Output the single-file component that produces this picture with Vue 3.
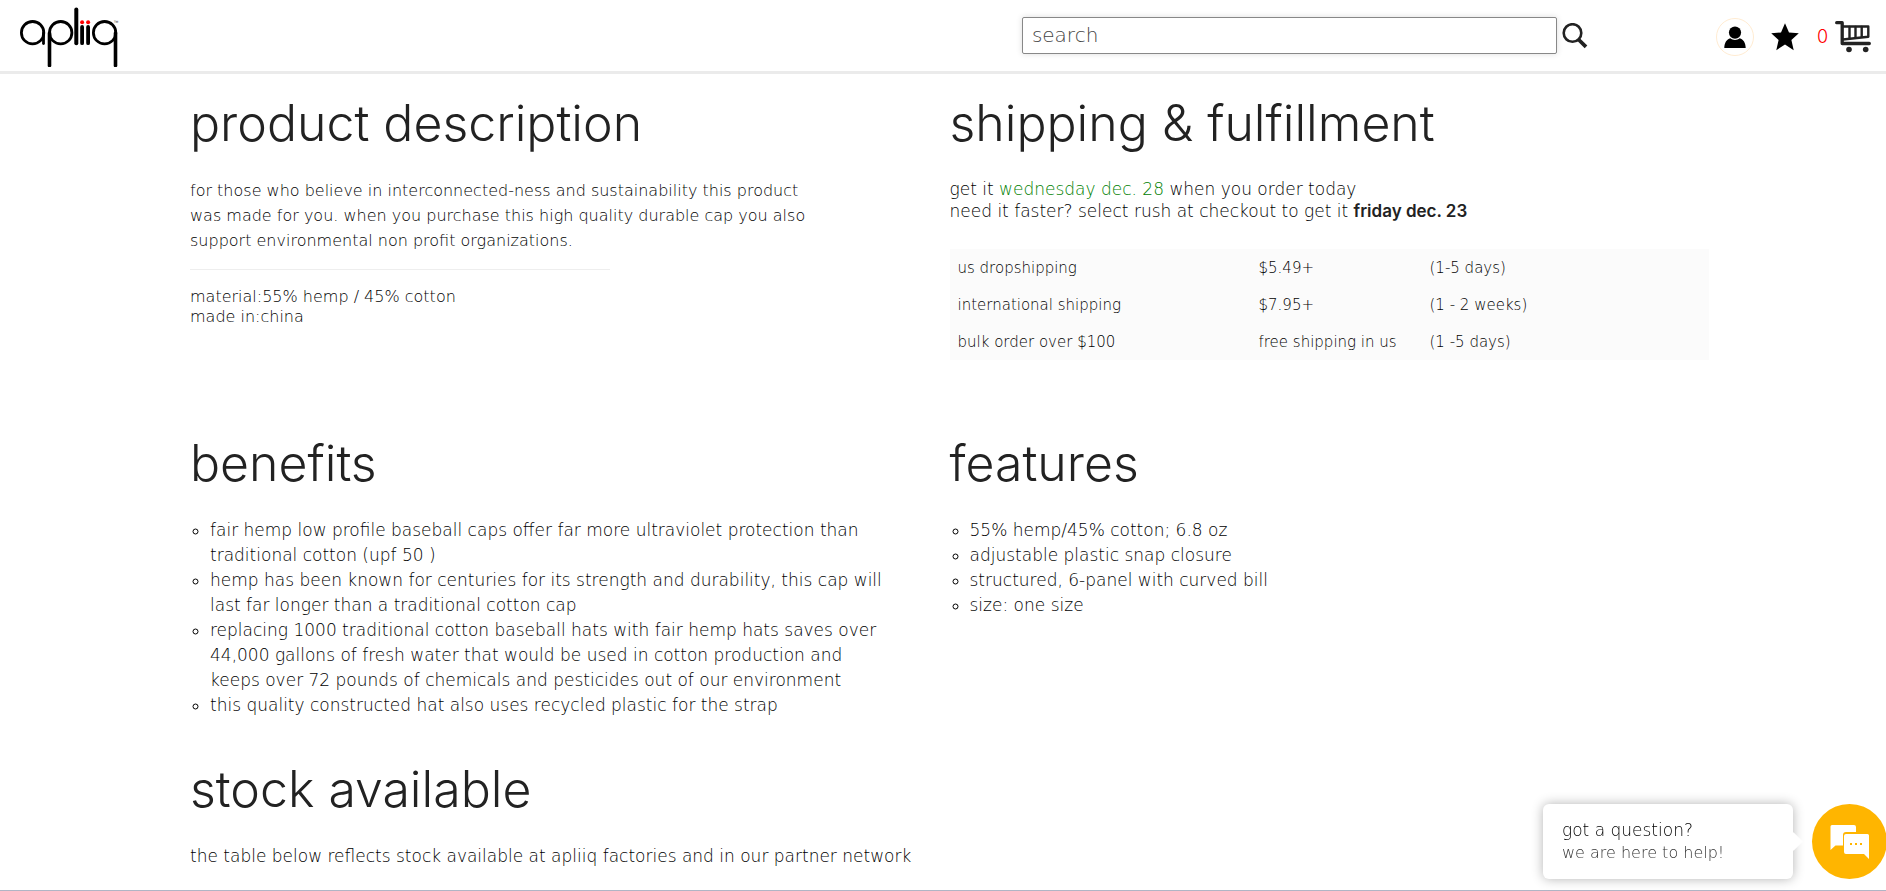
<script setup>
import { ref } from 'vue'

const query = ref('')
const cartCount = ref(0)

const shipping = [
  { method: 'us dropshipping', price: '$5.49+', time: '(1-5 days)' },
  { method: 'international shipping', price: '$7.95+', time: '(1 - 2 weeks)' },
  { method: 'bulk order over $100', price: 'free shipping in us', time: '(1 -5 days)' },
]

const benefits = [
  'fair hemp low profile baseball caps offer far more ultraviolet protection than traditional cotton (upf 50 )',
  'hemp has been known for centuries for its strength and durability, this cap will last far longer than a traditional cotton cap',
  'replacing 1000 traditional cotton baseball hats with fair hemp hats saves over 44,000 gallons of fresh water that would be used in cotton production and keeps over 72 pounds of chemicals and pesticides out of our environment',
  'this quality constructed hat also uses recycled plastic for the strap',
]

const features = [
  '55% hemp/45% cotton; 6.8 oz',
  'adjustable plastic snap closure',
  'structured, 6-panel with curved bill',
  'size: one size',
]
</script>

<template>
  <div class="page">
    <header class="bar">
      <a class="logo" href="#" aria-label="apliiq home">
        <svg width="100" height="60" viewBox="19 7 100 60" fill="none" stroke="#000" stroke-width="2.8" stroke-linecap="round">
          <circle cx="32.6" cy="32.7" r="11.2" />
          <path d="M43.5 33V43.5" />
          <circle cx="60.7" cy="32.7" r="11.2" />
          <path d="M49.5 33V65.5" stroke-width="3.6" />
          <path d="M76.3 9.6V43.2" stroke-width="4" />
          <path d="M82.1 27V43.2M88.1 27V43.2" stroke-width="3.8" />
          <circle cx="104.6" cy="32.7" r="11.2" />
          <path d="M115.5 33V65.5" stroke-width="3.6" />
          <g fill="#f00" stroke="none">
            <circle cx="82.1" cy="22.3" r="2" />
            <circle cx="88.1" cy="22.3" r="2" />
          </g>
          <text x="113.5" y="23.5" font-size="5" fill="#333" stroke="none">™</text>
        </svg>
      </a>

      <form class="search" role="search" @submit.prevent>
        <input v-model="query" type="search" placeholder="search" aria-label="search" />
        <button type="submit" aria-label="submit search">
          <svg width="26" height="26" viewBox="0 0 26 26" fill="none" stroke="#222">
            <circle cx="10.5" cy="10" r="8.8" stroke-width="2.6" />
            <path d="M16.5 16.5L24 23.8" stroke-width="3.8" />
          </svg>
        </button>
      </form>

      <nav class="tools" aria-label="account">
        <a class="user" href="#" aria-label="my account">
          <svg width="22" height="22" viewBox="0 0 22 22">
            <circle cx="11" cy="6.6" r="6.1" />
            <path d="M.3 22c0-5 2.4-8.7 6-9.7 2.700 2.300 6.700 2.300 9.400 0 3.600 1 6 4.700 6 9.700z" />
          </svg>
        </a>
        <a class="star" href="#" aria-label="favorites">
          <svg width="28" height="28" viewBox="0 0 28 28">
            <path d="M14 .2l4 9.300 9.800.7-7.400 6.700 2.300 10.300L14 21.600l-8.700 5.600 2.300-10.300L.2 10.200 10 9.500z" />
          </svg>
        </a>
        <a class="cart" href="#" aria-label="cart">
          <span>{{ cartCount }}</span>
          <svg width="36" height="32" viewBox="0 0 36 32" fill="none" stroke="#222" stroke-linecap="round" stroke-linejoin="round">
            <path d="M1.700 1.700H7.200V22.500H34.300" stroke-width="3.300" />
            <path d="M8 5.500H33.300V15.700L8 18.500" stroke-width="2.400" />
            <path d="M14.500 6V17M20.500 6V16.500M26.700 6V15.800" stroke-width="2.400" />
            <circle cx="14" cy="28.500" r="2.800" fill="#222" stroke="none" />
            <circle cx="30.700" cy="28.500" r="2.800" fill="#222" stroke="none" />
          </svg>
        </a>
      </nav>
    </header>

    <main class="content">
      <section class="top">
        <h2>product description</h2>
        <p class="intro">
          for those who believe in interconnected-ness and sustainability this product was made for you.
          when you purchase this high quality durable cap you also support environmental non profit organizations.
        </p>
        <hr />
        <p class="specs">material:55% hemp / 45% cotton<br />made in:china</p>
      </section>

      <section class="top">
        <h2>shipping &amp; fulfillment</h2>
        <p class="delivery">
          get it <span class="date">wednesday dec. 28</span> when you order today<br />
          need it faster? select rush at checkout to get it <strong>friday dec. 23</strong>
        </p>
        <table>
          <tbody>
            <tr v-for="row in shipping" :key="row.method">
              <td>{{ row.method }}</td>
              <td>{{ row.price }}</td>
              <td>{{ row.time }}</td>
            </tr>
          </tbody>
        </table>
      </section>

      <section class="middle">
        <h2>benefits</h2>
        <ul>
          <li v-for="item in benefits" :key="item">{{ item }}</li>
        </ul>
      </section>

      <section class="middle">
        <h2>features</h2>
        <ul>
          <li v-for="item in features" :key="item">{{ item }}</li>
        </ul>
      </section>

      <section class="stock">
        <h2>stock available</h2>
        <p>the table below reflects stock available at apliiq factories and in our partner network</p>
      </section>
    </main>
    <div class="rule"></div>

    <aside class="chat">
      <div class="bubble">
        <p class="ask">got a question?</p>
        <p class="help">we are here to help!</p>
      </div>
      <button type="button" aria-label="open chat">
        <svg width="40" height="36" viewBox="0 0 40 36">
          <path d="M2 1H24a2 2 0 0 1 2 2V8H16a3 3 0 0 0-3 3V21.500H5.500L.5 26V2.500A1.500 1.500 0 0 1 2 1z" fill="#fff" />
          <path d="M16 10H37.500a1.500 1.500 0 0 1 1.500 1.500V35L34 30H16a2 2 0 0 1-2-2V12a2 2 0 0 1 2-2z" fill="#fff" />
          <g fill="#ffb500">
            <rect x="20" y="19" width="2" height="2" />
            <rect x="25" y="19" width="2" height="2" />
            <rect x="30" y="19" width="2" height="2" />
          </g>
        </svg>
      </button>
    </aside>
  </div>
</template>

<style>
body {
  margin: 0;
  background: #fff;
}
</style>

<style scoped>
.page {
  font-family: "DejaVu Sans Light", "DejaVu Sans", sans-serif;
  font-weight: 200;
  color: #000;
}
h2,
p,
ul {
  margin: 0;
}
a {
  color: inherit;
  text-decoration: none;
}
svg {
  display: block;
}
button {
  border: 0;
  padding: 0;
  background: none;
  cursor: pointer;
}
.bar {
  display: flex;
  align-items: center;
  box-sizing: border-box;
  height: 74px;
  padding: 2px 15px 0 19px;
  border-bottom: 3px solid #ebebeb;
  background: #fff;
}
.search {
  display: flex;
  align-items: center;
  gap: 5px;
  flex: 0 1 566px;
  margin: 0 128px 2px auto;
}
.search input {
  flex: 1;
  min-width: 0;
  box-sizing: border-box;
  height: 37px;
  padding: 0 9px 2px;
  border: 1px solid #888;
  border-radius: 2px;
  box-shadow: 0 0 6px #ddd;
  font: inherit;
  font-size: 20px;
  appearance: none;
  outline: none;
}
.search input::placeholder {
  color: #444;
}
.tools {
  display: flex;
  align-items: center;
}
.user {
  display: grid;
  place-items: center;
  width: 36px;
  height: 36px;
  border: 1px solid #ffecd2;
  border-radius: 50%;
}
.star {
  margin: 0 18px 0 17px;
}
.cart {
  display: flex;
  align-items: center;
  gap: 7px;
}
.cart span {
  font-family: Inter, sans-serif;
  font-weight: 300;
  font-size: 18px;
  color: #f00;
}
.content {
  display: grid;
  grid-template-columns: 1fr 1fr;
  padding: 20px 177px 0 190px;
}
.top {
  margin-bottom: 74px;
}
.middle {
  margin-bottom: 42px;
}
.stock {
  grid-column: 1 / -1;
  margin-bottom: 21px;
}
h2 {
  margin-bottom: 26px;
  font-family: Inter, sans-serif;
  font-size: 50px;
  line-height: 58px;
  font-weight: 300;
  color: #222;
}
.intro {
  max-width: 636px;
  font-size: 16px;
  line-height: 25px;
}
hr {
  width: 420px;
  height: 1px;
  margin: 16px 0 17px;
  border: 0;
  background: #eee;
}
.specs {
  font-size: 16px;
  line-height: 20px;
}
.delivery {
  margin-bottom: 27px;
  font-size: 17px;
  line-height: 22px;
}
.date {
  color: #008000;
}
strong {
  font-family: Inter, sans-serif;
  font-weight: 600;
  color: #222;
}
table {
  width: 100%;
  border-collapse: collapse;
  background: #fbfbfb;
  font-size: 15px;
  line-height: 21px;
}
td {
  padding: 9px 8px 7px;
}
td:nth-child(1) {
  width: 285px;
}
td:nth-child(2) {
  width: 155px;
  white-space: nowrap;
}
ul {
  padding: 0 60px 0 20px;
  font-size: 17px;
  line-height: 25px;
  list-style: circle;
}
.stock p {
  font-size: 17px;
  line-height: 25px;
}
.rule {
  height: 1px;
  background: #b0b5c5;
}
.chat {
  position: fixed;
  right: -1px;
  bottom: 12px;
  display: flex;
  gap: 19px;
}
.bubble {
  position: relative;
  box-sizing: border-box;
  width: 250px;
  padding: 15px 19px;
  border-radius: 6px;
  background: #fff;
  box-shadow: 0 0 12px rgba(0, 0, 0, 0.3);
}
.bubble::after {
  content: "";
  position: absolute;
  top: 31px;
  right: -7px;
  width: 13px;
  height: 13px;
  background: #fff;
  transform: rotate(45deg);
}
.ask {
  font-size: 17px;
  line-height: 23px;
}
.help {
  font-size: 16px;
  line-height: 22px;
  color: #333;
}
.chat button {
  display: grid;
  place-items: center;
  width: 75px;
  height: 75px;
  border-radius: 50%;
  background: #ffb500;
}
</style>
